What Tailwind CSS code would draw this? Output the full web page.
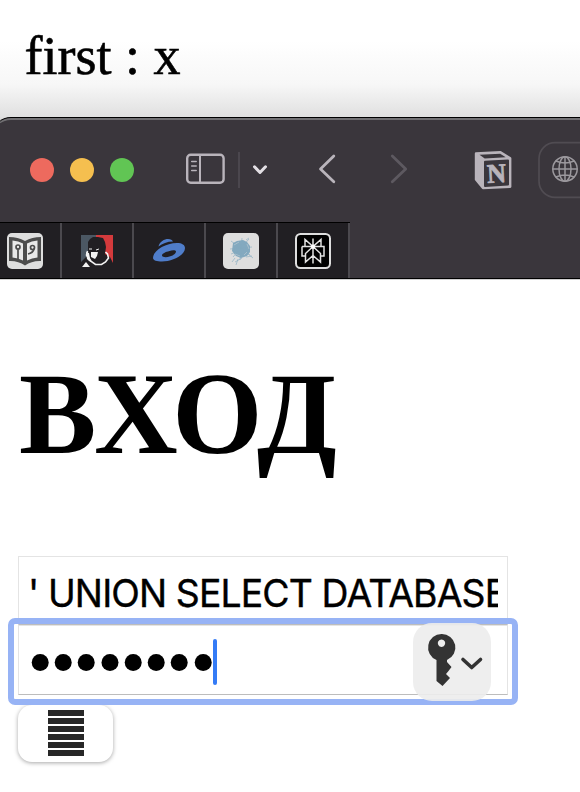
<!DOCTYPE html>
<html lang="ru">
<head>
<meta charset="utf-8">
<title>ВХОД</title>
<script src="https://cdn.jsdelivr.net/npm/@tailwindcss/browser@4"></script>
</head>
<body class="w-[580px] h-[792px] overflow-hidden bg-white text-black">
<div class="flex flex-col w-[580px] h-[792px] overflow-hidden">
  <header class="h-[117px] shrink-0 pl-[24.5px] pt-[25px] bg-linear-to-b from-white from-35% via-[#f7f7f7] via-72% to-[#e0e0e0]">
    <p class="font-['Liberation_Serif',serif] text-[54px] leading-[62px] whitespace-pre [-webkit-text-stroke:0.6px_black]">first : x</p>
  </header>
  <section class="h-[162px] shrink-0 bg-[#dedede]">
    <div class="-ml-[7px] w-[610px] h-[162px] rounded-tl-[18px] border-y border-black bg-[#3a363c] overflow-hidden">
      <div class="h-[104px] pl-[7px] rounded-tl-[18px] border-t-2 border-[#717073]">
        <svg class="block w-[580px] h-[102px]" viewBox="0 120 580 102" fill="none" stroke-linecap="round" stroke-linejoin="round">
          <circle cx="42" cy="170" r="12" fill="#ed6a5e"/>
          <circle cx="82" cy="170" r="12" fill="#f5bf4f"/>
          <circle cx="122" cy="170" r="12" fill="#61c554"/>
          <g stroke="#b9b4bb">
            <rect x="187.2" y="154.7" width="36.4" height="28.1" rx="3.5" stroke-width="2.4"/>
            <path d="M200 155v28" stroke-width="2"/>
            <path d="M191.700 161.600h4.500M191.700 166h4.500M191.700 170.500h4.500" stroke-width="1.500"/>
          </g>
          <path d="M239 152v36" stroke="#4f4b52" stroke-width="1.700" stroke-linecap="butt"/>
          <path d="m254.500 166.800 5.500 5.700 5.500-5.700" stroke="#e2dfe4" stroke-width="3"/>
          <path d="m333.800 156-13.300 13 13.300 12.700" stroke="#b9b4bb" stroke-width="2.800"/>
          <path d="m392.300 156 13.400 13-13.400 12.700" stroke="#5d5960" stroke-width="2.800"/>
          <g>
            <path d="M476 153.500l24.500-1.300 9.700 6v28.500L483 188l-7-8.500z" stroke="#b9b4bb" stroke-width="2.400" fill="#b9b4bb"/>
            <path d="M479.500 154.800l20.700-1.100 5.500 3.500-21 1.200z" fill="#3a363c"/>
            <path d="M484 161.800q0-1 1-1l23-1.300q1 0 1 1v24q0 1-1 1l-23 1.400q-1 0-1-1z" fill="#3a363c"/>
            <text x="487" y="182.500" font-family="Liberation Serif, serif" font-weight="700" font-size="27" textLength="19" lengthAdjust="spacingAndGlyphs" transform="rotate(-3 496 174)" fill="#b9b4bb" stroke="#b9b4bb" stroke-width=".8">N</text>
          </g>
          <rect x="539" y="142.700" width="80" height="54.600" rx="16" stroke="#504c52" stroke-width="1.700"/>
          <g stroke="#9b989d" stroke-width="1.500">
            <circle cx="565" cy="169" r="12.200"/>
            <ellipse cx="565" cy="169" rx="6" ry="12.200"/>
            <path d="M565 157v24M553 169h24M556 161q9 4 18 0M556 177q9-4 18 0"/>
          </g>
        </svg>
      </div>
      <div class="ml-[7px] w-[350px] h-[56px] flex border-t border-black bg-[#211f23]">
        <div class="w-[62px] shrink-0 border-r-2 border-[#4b494e]">
          <svg class="block w-[60px] h-[55px]" viewBox="0 223 60 55" fill="none">
            <rect x="7" y="233" width="36" height="36" rx="5" fill="#dedede"/>
            <path d="M9 237q9 0 16 4 7-4 16-4v24q-9-.5-16 4.500Q18 260.500 9 261z" fill="#4c4c4c"/>
            <path d="M12.500 240.500q6 .5 10.500 3v17q-5-2.700-10.500-3zM37.500 240.500q-6 .5-10.500 3v17q5-2.700 10.500-3z" fill="#e8e8e8"/>
            <g stroke="#4c4c4c" stroke-width="1.700"><path d="M18 249v10"/><circle cx="18" cy="247" r="2"/><circle cx="32.500" cy="247.500" r="2"/><path d="M34 249q-1 4-6 5"/></g>
          </svg>
        </div>
        <div class="w-[72px] shrink-0 border-r-2 border-[#4b494e]">
          <svg class="block w-[70px] h-[55px]" viewBox="62 223 70 55" fill="none">
            <path d="M81 235h15v32H81z" fill="#4b5763"/><path d="M96 235h17v32H96z" fill="#d43a3c"/>
            <path d="M81 267v-5l7-7 0-13 2-3 3-2 5 0 5 1 2 4 1 5-1 7 5 3 3 6 0 4z" fill="#211f23"/>
            <path d="m91 252 7 0-1 4-2 3-4-2z" fill="#f2f2f2"/>
            <path d="M89 249h3M96 250l3-1" stroke="#f2f2f2" stroke-width="1"/>
            <path d="m87.500 251-1 4 4 6 5 3.500 6 0 4-2.500 3-4-1-4-2-2" stroke="#f2f2f2" stroke-width="1.600"/>
            <path d="m86 252 3 1 1 5 2 4-3-1-2-2z" fill="#f2f2f2"/>
            <path d="m86 262 4 5h-8z" fill="#f2f2f2"/>
          </svg>
        </div>
        <div class="w-[72px] shrink-0 border-r-2 border-[#4b494e]">
          <svg class="block w-[70px] h-[55px]" viewBox="134 223 70 55" fill="none">
            <path d="M158.500 246.500c1-5 6-7.500 9.500-7.500 3 0 4 1 5 2.500-6 0-10.500 2-14.500 5z" fill="#4f7dca"/>
            <path fill-rule="evenodd" d="M153 258c0-7 12-15 24-15 5 0 8 2 8 5 0 7-12 13.500-23 13.500-5 0-9-1-9-3.500zM162 255.500c0 2 5 2 7.500 1 4-1 6.500-3 6.500-5 0-1.500-4-1.500-6.500-.5-4 1-7.500 2.500-7.500 4.500z" fill="#4f7dca"/>
          </svg>
        </div>
        <div class="w-[72px] shrink-0 border-r-2 border-[#4b494e]">
          <svg class="block w-[70px] h-[55px]" viewBox="206 223 70 55" fill="none">
            <rect x="223" y="233" width="36" height="36" rx="5" fill="#dedede"/>
            <path d="m233 243 4-2 6-1 4 2 3 4v6l-3 4-6 2-5-2-4-5z" fill="#83a9bf"/>
            <g stroke="#83a9bf" stroke-width=".6"><path d="m231 241 19 14M249 239l-16 18M230 249l22-2M242 238l-2 22M246 240l3-2M235 258l-3 4M242 258l-7 4M248 254l5 4M238 259l-2 6M231 254l5-2M246 257l6-1"/></g>
            <g stroke="#dedede" stroke-width=".4"><path d="m234 245 5-3M247 244l2 5M235 254l5 2M244 255l3-3"/></g>
          </svg>
        </div>
        <div class="w-[72px] shrink-0 border-r-2 border-[#4b494e]">
          <svg class="block w-[70px] h-[55px]" viewBox="278 223 70 55" fill="none">
            <rect x="296" y="234" width="34" height="34" rx="4.500" fill="#000" stroke="#dedede" stroke-width="2"/>
            <path d="M313 238.500v25M305 246v-6.500l8 7 8-7v6.500M302 246.500h22v9.500h-3.500M302 246.500v9.500h3.500M313 246.500l-7.500 7v8.500l7.500-6.500M313 246.500l7.500 7v8.500l-7.500-6.500" stroke="#e2e2e2" stroke-width="1.500"/>
            <circle cx="313" cy="246.500" r="2" fill="#fff"/>
          </svg>
        </div>
      </div>
    </div>
  </section>
  <main class="flex-1 pl-[18px] border-t border-[#d0d0d0]">
    <h1 class="mt-[69px] h-[130px] pl-px font-['Liberation_Serif',serif] font-bold text-[116px] leading-[130px] tracking-[0.4px] whitespace-nowrap">ВХОД</h1>
    <form class="mt-[77px]">
      <div class="w-[490px] h-[69px] px-[10px] border border-[#e4e4e4] border-b-[#bdbdbd] bg-white">
        <div class="w-[469px] h-[67px] overflow-hidden whitespace-pre font-[Inter,sans-serif] text-[38.500px] leading-[73px] tracking-[-0.9px]"><span class="inline-block -ml-px origin-left scale-x-[0.97] [-webkit-text-stroke:0.4px_black]">' UNION SELECT DATABASE</span></div>
      </div>
      <div class="relative w-[490px] h-[70px] border border-[#e4e4e4] border-b-[#bdbdbd] bg-white flex items-center justify-between pl-3 pr-4 before:absolute before:-inset-x-[11px] before:-top-[8px] before:-bottom-[11px] before:border-6 before:border-[#97b3f5] before:rounded-[7px]">
        <div class="flex items-center mt-[4px]">
          <svg class="w-[182px] h-[20px]" viewBox="31 653 182 20"><g><circle cx="40.200" cy="663.500" r="8.500"/><circle cx="63.200" cy="663.500" r="8.500"/><circle cx="86.200" cy="663.500" r="8.500"/><circle cx="110" cy="663.500" r="8.500"/><circle cx="133.200" cy="663.500" r="8.500"/><circle cx="156.200" cy="663.500" r="8.500"/><circle cx="179.200" cy="663.500" r="8.500"/><circle cx="203.200" cy="663.500" r="8.500"/></g></svg>
          <span class="w-1 h-[46px] rounded-sm bg-[#347bf6]"></span>
        </div>
        <svg class="relative z-10 w-[78px] h-[78px] shrink-0 mt-[4px]" viewBox="413 623 78 78" fill="none">
          <rect x="413" y="623" width="78" height="78" rx="19" fill="#ececec" fill-opacity=".9"/>
          <path fill-rule="evenodd" d="M441.500 634a13.500 13.500 0 0 1 5.500 26l0 2 4.500 5-3 4-2.500 3 4 4-7.500 8-6-5V660a13.500 13.500 0 0 1 5-26zm0 5.500a3.700 3.700 0 1 0 .01 0z" fill="#333"/>
          <path d="m463 659.500 8.700 8 8.800-8" stroke="#333" stroke-width="3.600" stroke-linecap="round" stroke-linejoin="round"/>
        </svg>
      </div>
      <button type="button" class="mt-[10px] w-[95px] h-[57px] rounded-[14px] bg-white shadow-[0_1px_4px_rgba(0,0,0,0.35)] flex flex-col items-center gap-[2px] pt-[5px]">
        <span class="block w-[36px] h-[6px] bg-[#272727]"></span>
        <span class="block w-[36px] h-[6px] bg-[#272727]"></span>
        <span class="block w-[36px] h-[6px] bg-[#272727]"></span>
        <span class="block w-[36px] h-[6px] bg-[#272727]"></span>
        <span class="block w-[36px] h-[6px] bg-[#272727]"></span>
        <span class="block w-[36px] h-[6px] bg-[#272727]"></span>
      </button>
    </form>
  </main>
</div>
</body>
</html>
